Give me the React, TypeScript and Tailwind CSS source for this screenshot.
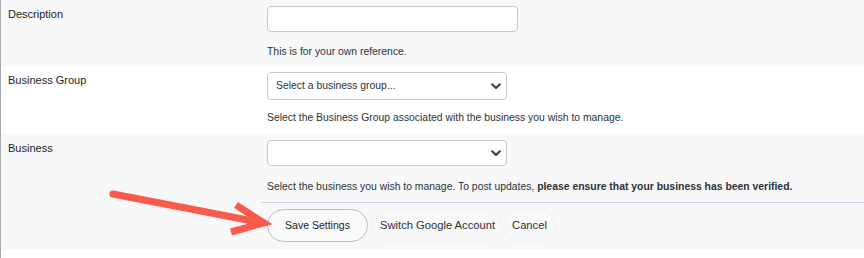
import React from "react";

function Chevron() {
  return (
    <svg width="10" height="7" viewBox="0 0 10 7" className="block">
      <path d="M1.2 1.3 L5 5 L8.8 1.3" fill="none" stroke="#3c434a" strokeWidth="2.2" strokeLinecap="round" strokeLinejoin="round" />
    </svg>
  );
}

export default function App() {
  return (
    <div className="relative w-[864px] h-[258px] bg-white border-l border-[#a7aaad] font-['Liberation_Sans',Arial,sans-serif] text-[#1d2327]">
      {/* Row 1 */}
      <div className="flex h-[66px] bg-[#f8f8f8]">
        <div className="w-[260px] pl-[7px] pt-[7px] text-[11px] leading-[14px]">Description</div>
        <div className="flex-1 pl-[6px] pt-[6px]">
          <div className="w-[251px] h-[26px] rounded-[4px] border border-[#c9c9c9] bg-white" />
          <p className="mt-[14px] text-[10.4px] leading-[12px] text-[#2c3338]">This is for your own reference.</p>
        </div>
      </div>
      {/* Row 2 */}
      <div className="flex h-[68px] bg-white">
        <div className="w-[260px] pl-[7px] pt-[7px] text-[11px] leading-[14px]">Business Group</div>
        <div className="flex-1 pl-[6px] pt-[6px]">
          <div className="w-[240px] h-[28px] rounded-[4px] border border-[#c9c9c9] bg-white flex items-center justify-between pl-[8px] pr-[5px]">
            <span className="text-[10.4px] text-[#2c3338]">Select a business group...</span>
            <Chevron />
          </div>
          <p className="mt-[12px] text-[10.4px] leading-[12px] text-[#2c3338]">
            Select the Business Group associated with the business you wish to manage.
          </p>
        </div>
      </div>
      {/* Row 3 */}
      <div className="flex h-[115px] bg-[#f8f8f8]">
        <div className="w-[260px] pl-[7px] pt-[7px] text-[11px] leading-[14px]">Business</div>
        <div className="flex-1 pt-[6px]">
          <div className="pl-[6px]">
            <div className="w-[240px] h-[26px] rounded-[4px] border border-[#c9c9c9] bg-white flex items-center justify-end pr-[5px]">
              <Chevron />
            </div>
            <p className="mt-[15px] text-[10.4px] leading-[12px] text-[#2c3338]">
              Select the business you wish to manage. To post updates,{" "}
              <strong className="font-bold">please ensure that your business has been verified.</strong>
            </p>
          </div>
          <div className="mt-[9px] h-px bg-[#c5d1e6]" />
          <div className="mt-[6px] pl-[6px] flex items-center gap-[3px]">
            <button className="h-[33px] w-[101px] rounded-full border border-[#bdbdbd] bg-[#f9f9f9] text-[10.5px] text-[#1d2327]">
              Save Settings
            </button>
            <button className="h-[33px] rounded-full border border-[#f1f1f1] bg-[#f8f8f8] pl-[8px] pr-[6px] text-[11.2px] text-[#2c3338]">
              Switch Google Account
            </button>
            <button className="h-[33px] rounded-full border border-[#f1f1f1] bg-[#f8f8f8] pl-[8px] pr-[8px] -ml-[2px] text-[11.2px] text-[#2c3338]">
              Cancel
            </button>
          </div>
        </div>
      </div>
      {/* Arrow overlay */}
      <svg className="absolute left-[-1px] top-0 pointer-events-none" width="864" height="258" viewBox="0 0 864 258">
        <line x1="113" y1="194" x2="258" y2="222" stroke="#fa5a4c" strokeWidth="7" strokeLinecap="round" />
        <polyline points="236,205 264,223 231,232" fill="none" stroke="#fa5a4c" strokeWidth="7" strokeLinecap="butt" strokeLinejoin="miter" />
      </svg>
    </div>
  );
}
